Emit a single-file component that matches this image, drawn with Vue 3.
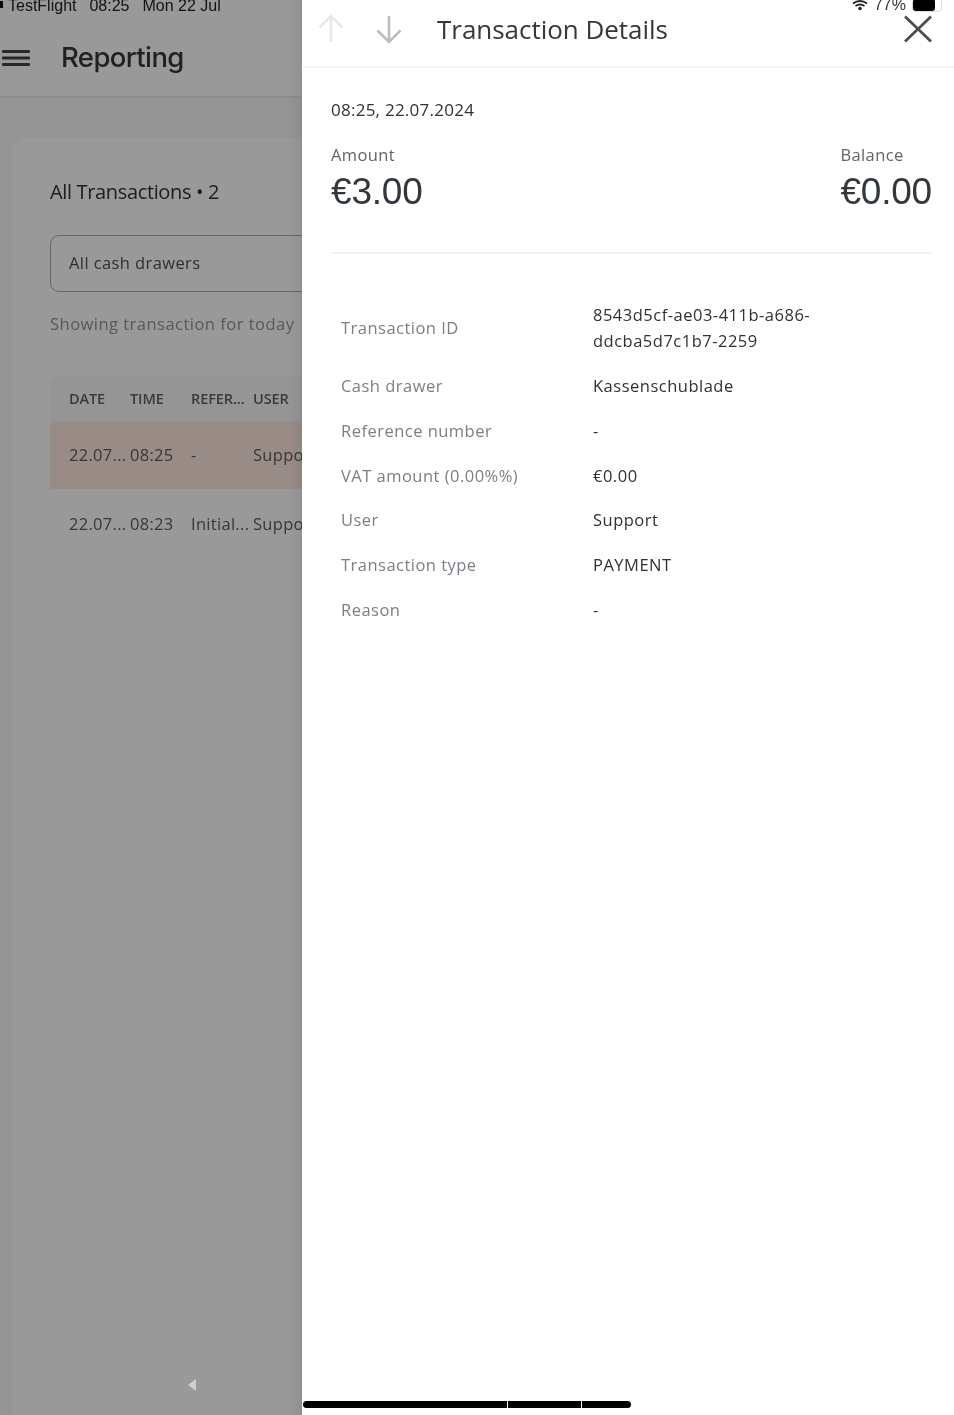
<script setup>
const heads = ['DATE', 'TIME', 'REFER...', 'USER']
const rows = [
  { id: 1, cells: ['22.07...', '08:25', '-', 'Support'], active: true },
  { id: 2, cells: ['22.07...', '08:23', 'Initial...', 'Support'], active: false }
]
const details = [
  { label: 'Transaction ID', value: '8543d5cf-ae03-411b-a686-ddcba5d7c1b7-2259', tall: true },
  { label: 'Cash drawer', value: 'Kassenschublade' },
  { label: 'Reference number', value: '-' },
  { label: 'VAT amount (0.00%%)', value: '€0.00' },
  { label: 'User', value: 'Support' },
  { label: 'Transaction type', value: 'PAYMENT' },
  { label: 'Reason', value: '-' }
]
</script>

<template>
  <div class="screen">
    <section class="behind">
      <div class="status-left"><span class="dot"></span>TestFlight<span class="gap">08:25</span><span class="gap">Mon 22 Jul</span></div>
      <header class="app-bar">
        <svg class="menu" width="28" height="18" viewBox="0 0 28 18" aria-hidden="true">
          <path d="M1 2.5H27M1 9H27M1 15.500H27" stroke="#3f4449" stroke-width="2.800" stroke-linecap="round" />
        </svg>
        <h1>Reporting</h1>
      </header>
      <main class="page">
        <div class="card">
          <h2>All Transactions • 2</h2>
          <div class="select">All cash drawers</div>
          <p class="hint">Showing transaction for today</p>
          <div class="table">
            <div class="tr th">
              <span v-for="h in heads" :key="h">{{ h }}</span>
            </div>
            <div v-for="r in rows" :key="r.id" class="tr td" :class="{ active: r.active }">
              <span v-for="(c, i) in r.cells" :key="i">{{ c }}</span>
            </div>
          </div>
        </div>
      </main>
      <div class="scrim"></div>
      <span class="collapse"></span>
    </section>

    <aside class="panel">
      <header class="panel-head">
        <svg class="arrow" width="30" height="30" viewBox="0 0 30 30" aria-hidden="true">
          <path d="M15 28V2M3.500 13.500L15 2L26.500 13.500" fill="none" stroke="#e6e8ea" stroke-width="2.600" />
        </svg>
        <svg class="arrow" width="30" height="30" viewBox="0 0 30 30" aria-hidden="true">
          <path d="M15 2V28M3.500 16.500L15 28L26.500 16.500" fill="none" stroke="#b9bdc2" stroke-width="2.600" />
        </svg>
        <h2>Transaction Details</h2>
        <svg class="close" width="30" height="28" viewBox="0 0 30 28" aria-hidden="true">
          <path d="M2 1.500L28 26.500M28 1.500L2 26.500" stroke="#4a4f54" stroke-width="2.800" />
        </svg>
      </header>
      <div class="panel-body">
        <div class="stamp">08:25, 22.07.2024</div>
        <div class="totals">
          <div>
            <div class="tot-label">Amount</div>
            <div class="tot-value">€3.00</div>
          </div>
          <div>
            <div class="tot-label">Balance</div>
            <div class="tot-value">€0.00</div>
          </div>
        </div>
        <dl class="details">
          <div v-for="d in details" :key="d.label" class="detail" :class="{ tall: d.tall }">
            <dt>{{ d.label }}</dt>
            <dd>{{ d.value }}</dd>
          </div>
        </dl>
      </div>
    </aside>

    <div class="status-right">
      <svg width="16" height="11" viewBox="0 0 16 11" aria-hidden="true">
        <path d="M1 3.500Q8 -1.500 15 3.500M3.500 6Q8 3 12.500 6" fill="none" stroke="#222" stroke-width="1.800" />
        <circle cx="8" cy="8.500" r="1.800" fill="#222" />
      </svg>
      <span>77%</span>
      <span class="battery"><i></i></span>
    </div>
    <div class="home"><i></i><i></i><i></i></div>
  </div>
</template>

<style>
html, body { margin: 0; background: #fff; }
</style>

<style scoped>
.screen {
  position: relative;
  display: flex;
  width: 954px;
  height: 1415px;
  overflow: hidden;
  background: #fff;
  font-family: "Open Sans", "Noto Sans", sans-serif;
  color: #33383d;
  filter: blur(0.7px);
}
.behind {
  position: relative;
  flex: 0 0 302px;
  width: 302px;
  overflow: hidden;
  background: #f7f7f7;
}
.scrim {
  position: absolute;
  inset: 0;
  background: linear-gradient(90deg, rgba(0, 0, 0, .4) 0, rgba(0, 0, 0, .4) 288px, rgba(0, 0, 0, .43) 301px);
}
.status-left {
  height: 10px;
  padding-left: 8px;
  font: 16px/11px "Liberation Sans", sans-serif;
  white-space: nowrap;
  background: #fff;
  position: relative;
  color: #222;
}
.dot {
  position: absolute;
  left: 0;
  top: 1px;
  width: 3px;
  height: 7px;
  background: #111;
}
.gap { margin-left: 13px; }
.app-bar {
  display: flex;
  align-items: center;
  height: 88px;
  padding: 9px 0 0 2px;
  box-sizing: border-box;
  background: #fff;
  border-bottom: 2px solid #e9e9e9;
}
.menu { flex: none; }
.app-bar h1 {
  margin: 0 0 0 31px;
  font: 500 27.500px/1 Inter, sans-serif;
  letter-spacing: -0.6px;
  color: #33383d;
}
.page { padding: 40px 0 0 12px; }
.card {
  width: 400px;
  height: 1400px;
  padding: 42px 0 0 38px;
  box-sizing: border-box;
  background: #fff;
  border-radius: 14px;
}
.card h2 {
  margin: 0;
  height: 24px;
  font-size: 20px;
  line-height: 24px;
  font-weight: 500;
  letter-spacing: -0.35px;
  color: #2d3237;
}
.select {
  width: 340px;
  height: 57px;
  margin-top: 31px;
  padding-left: 18px;
  box-sizing: border-box;
  border: 1.500px solid #a9adb3;
  border-radius: 9px;
  font-size: 16.500px;
  line-height: 54px;
  letter-spacing: 0.4px;
  color: #4a4f55;
}
.hint {
  margin: 20px 0 0;
  height: 24px;
  font-size: 16.500px;
  line-height: 24px;
  letter-spacing: 0.48px;
  color: #8f9398;
  white-space: nowrap;
}
.table { width: 340px; margin-top: 40px; }
.tr {
  display: grid;
  grid-template-columns: 61px 61px 62px 100px;
  padding-left: 19px;
  align-items: center;
  white-space: nowrap;
}
.th {
  height: 45px;
  border-radius: 9px 9px 0 0;
  background: #f8f9f9;
  font-size: 14.500px;
  font-weight: 600;
  letter-spacing: -0.1px;
  color: #5c6167;
}
.td {
  height: 69px;
  font-size: 16.500px;
  letter-spacing: 0.3px;
  color: #585c61;
}
.active {
  height: 68px;
  padding-bottom: 1px;
  box-sizing: border-box;
  background: #ffe9e1;
}
.collapse {
  position: absolute;
  left: 188px;
  top: 1379px;
  width: 0;
  height: 0;
  border-top: 6px solid transparent;
  border-bottom: 6px solid transparent;
  border-right: 8px solid #cfcfcf;
}
.panel {
  flex: 1;
  min-width: 0;
  background: #fff;
}
.panel-head {
  display: flex;
  align-items: center;
  height: 68px;
  padding: 0 21px 8px 14px;
  box-sizing: border-box;
  border-bottom: 2px solid #f4f6f6;
}
.arrow { flex: none; margin-right: 28px; }
.panel-head h2 {
  margin: 0 0 0 5px;
  flex: 1;
  font-size: 26px;
  line-height: 32px;
  font-weight: 500;
  letter-spacing: -0.03px;
  color: #33383d;
}
.close { flex: none; }
.panel-body { padding: 30px 22px 0 29px; }
.stamp {
  height: 24px;
  font-size: 17px;
  line-height: 24px;
  font-weight: 500;
  letter-spacing: 0.25px;
  color: #2d3237;
}
.totals {
  display: flex;
  justify-content: space-between;
  margin-top: 23px;
  height: 97px;
  padding-bottom: 10px;
  border-bottom: 2px solid #eff1f2;
}
.tot-label {
  height: 20px;
  font-size: 16.500px;
  line-height: 20px;
  letter-spacing: 0.4px;
  color: #60656c;
}
.tot-value {
  margin-top: 7px;
  font: 37px/40px "Liberation Sans", sans-serif;
  letter-spacing: -0.2px;
  color: #33383d;
}
.details { margin: 44px 0 0; padding-left: 10px; }
.detail {
  display: grid;
  grid-template-columns: 252px 222px;
  align-items: center;
  height: 44.700px;
}
.tall { height: 60px; margin-bottom: 6px; }
dt {
  font-size: 16.500px;
  line-height: 26px;
  letter-spacing: 0.48px;
  color: #7b7f85;
}
dd {
  margin: 0;
  font-size: 16.500px;
  line-height: 26px;
  font-weight: 500;
  letter-spacing: 0.5px;
  color: #2d3237;
  overflow-wrap: anywhere;
}
.status-right {
  position: absolute;
  top: -2px;
  right: 12px;
  display: flex;
  align-items: center;
  gap: 6px;
  height: 14px;
  font: 16px/14px "Liberation Sans", sans-serif;
  color: #333;
}
.battery {
  position: relative;
  width: 30px;
  height: 14px;
  box-sizing: border-box;
  border: 1px solid #ddd;
  border-radius: 4px;
}
.battery i {
  position: absolute;
  left: 0;
  top: 0;
  bottom: 0;
  width: 22px;
  background: #000;
  border-radius: 3px;
}
.home {
  position: absolute;
  left: 303px;
  top: 1401px;
  display: flex;
  width: 328px;
  height: 7px;
  border-radius: 4px;
  overflow: hidden;
}
.home i { background: #000; height: 100%; }
.home i:nth-child(1) { width: 205px; }
.home i:nth-child(2) { width: 73px; margin-left: 1px; }
.home i:nth-child(3) { width: 49px; margin-left: 1px; }
</style>
